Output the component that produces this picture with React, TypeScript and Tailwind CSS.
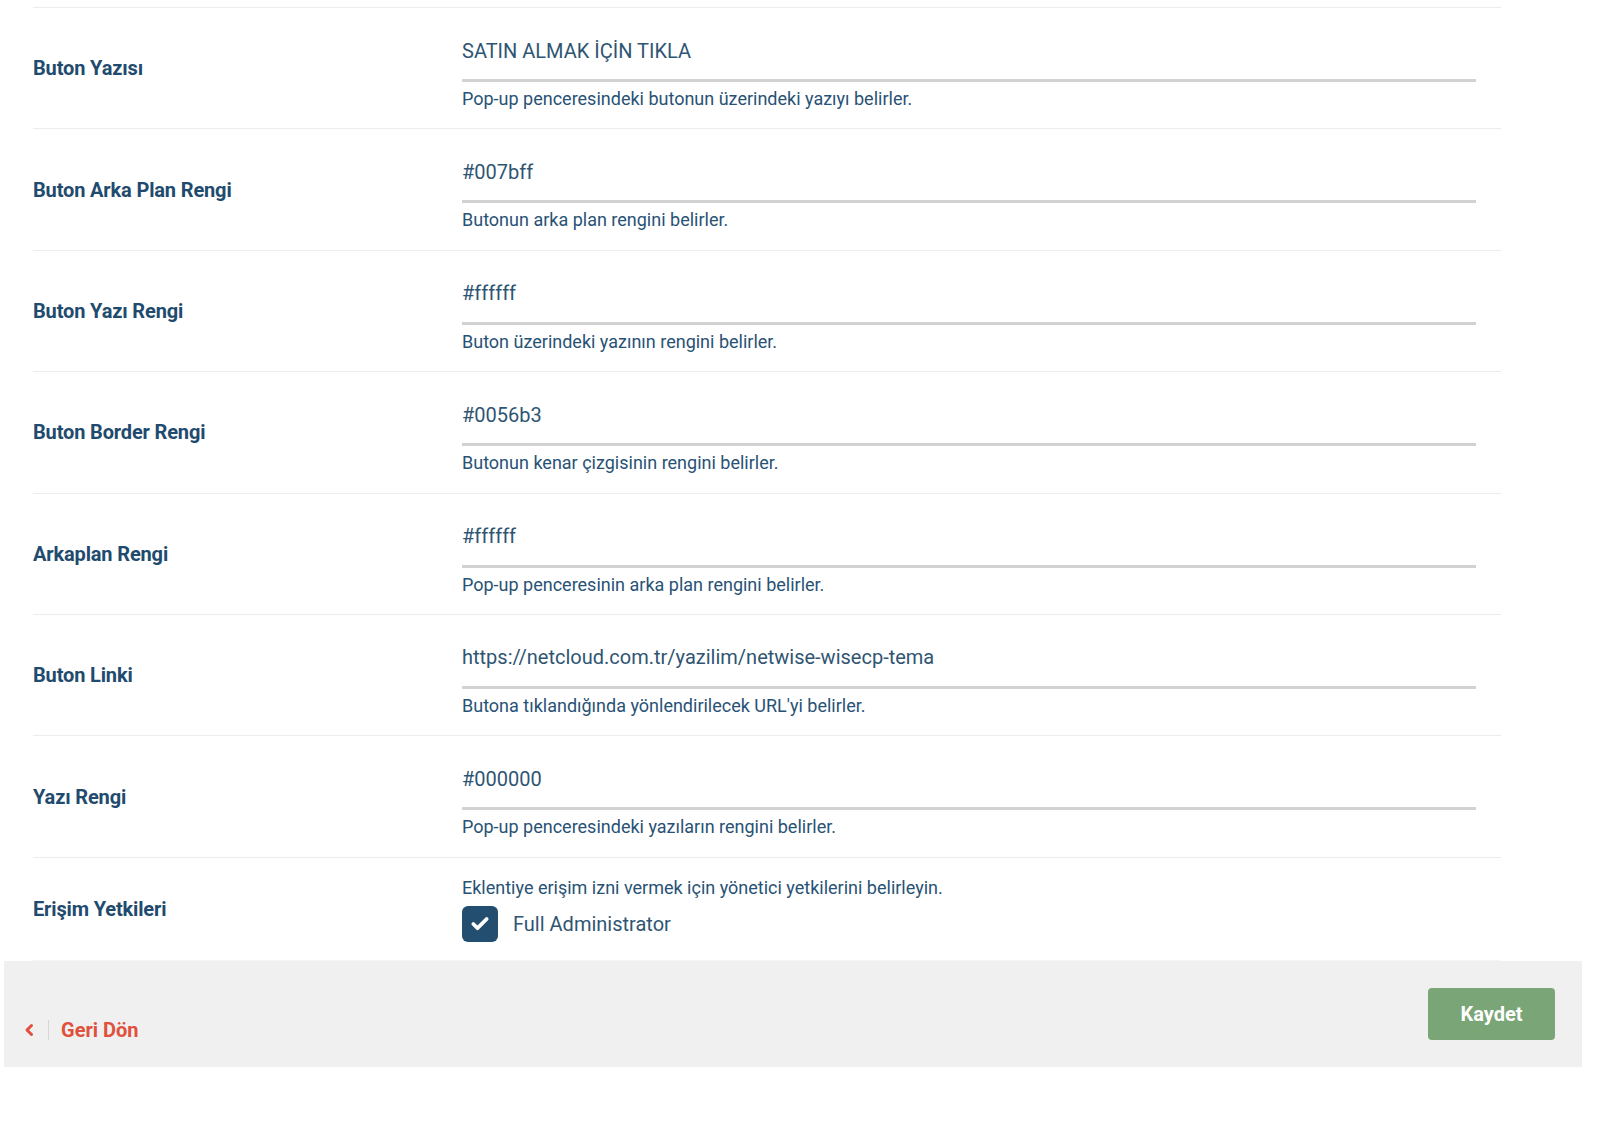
import { Check } from "lucide-react";

const fields = [
  {
    label: "Buton Yazısı",
    value: "SATIN ALMAK İÇİN TIKLA",
    help: "Pop-up penceresindeki butonun üzerindeki yazıyı belirler.",
  },
  {
    label: "Buton Arka Plan Rengi",
    value: "#007bff",
    help: "Butonun arka plan rengini belirler.",
  },
  {
    label: "Buton Yazı Rengi",
    value: "#ffffff",
    help: "Buton üzerindeki yazının rengini belirler.",
  },
  {
    label: "Buton Border Rengi",
    value: "#0056b3",
    help: "Butonun kenar çizgisinin rengini belirler.",
  },
  {
    label: "Arkaplan Rengi",
    value: "#ffffff",
    help: "Pop-up penceresinin arka plan rengini belirler.",
  },
  {
    label: "Buton Linki",
    value: "https://netcloud.com.tr/yazilim/netwise-wisecp-tema",
    help: "Butona tıklandığında yönlendirilecek URL'yi belirler.",
  },
  {
    label: "Yazı Rengi",
    value: "#000000",
    help: "Pop-up penceresindeki yazıların rengini belirler.",
  },
];

export default function App() {
  return (
    <div className="w-full min-h-[1125px] bg-white font-['Roboto',sans-serif]">
      <div className="ml-[4px] w-[1578px]">
        <div className="pl-[29px] pr-[81px]">
          <div className="h-[8px] border-b border-[#ececec]" />

          {fields.map((f, i) => (
            <div key={i} className="flex items-center h-[121.4px] border-b border-[#ececec]">
              <div className="w-[429px] text-[20px] font-bold text-[#1f4b6e] tracking-[-0.15px]">{f.label}</div>
              <div className="w-[1014px] self-start pt-[18px]">
                <input
                  readOnly
                  value={f.value}
                  className="block w-full h-[56px] pb-[4px] border-b-[3px] border-[#d2d2d2] bg-transparent outline-none text-[20px] text-[#2f5573]"
                />
                <p className="mt-[5px] leading-6 text-[18px] text-[#285275]">{f.help}</p>
              </div>
            </div>
          ))}

          {/* permissions */}
          <div className="flex items-center h-[103px] border-b border-[#f4f4f4]">
            <div className="w-[429px] text-[20px] font-bold text-[#1f4b6e] tracking-[-0.15px]">Erişim Yetkileri</div>
            <div className="w-[1014px]">
              <p className="leading-6 text-[18px] text-[#285275]">
                Eklentiye erişim izni vermek için yönetici yetkilerini belirleyin.
              </p>
              <label className="mt-[6px] flex items-center gap-[15px]">
                <span className="flex items-center justify-center w-[36px] h-[36px] rounded-[6px] bg-[#234e70]">
                  <Check className="w-[20px] h-[20px] text-white" strokeWidth={4.5} />
                </span>
                <span className="text-[20px] text-[#2f5573]">Full Administrator</span>
              </label>
            </div>
          </div>
        </div>

        {/* footer */}
        <div className="flex items-start justify-between h-[106px] bg-[#f0f0f0] pl-[20px] pr-[27px] pt-[27px]">
          <a className="mt-[27px] flex items-center text-[#e0503d]">
            <svg width="10" height="14" viewBox="0 0 10 14" fill="none" stroke="currentColor" strokeWidth="3" strokeLinecap="round" strokeLinejoin="round">
              <polyline points="7.5,2.5 3,7 7.5,11.5" />
            </svg>
            <span className="ml-[14px] mr-[12px] h-[20px] w-px bg-[#d6d6d6]" />
            <span className="text-[20px] font-bold">Geri Dön</span>
          </a>
          <button className="w-[127px] h-[52px] rounded-[4px] bg-[#79a577] text-white text-[20px] font-bold">
            Kaydet
          </button>
        </div>
      </div>
    </div>
  );
}
